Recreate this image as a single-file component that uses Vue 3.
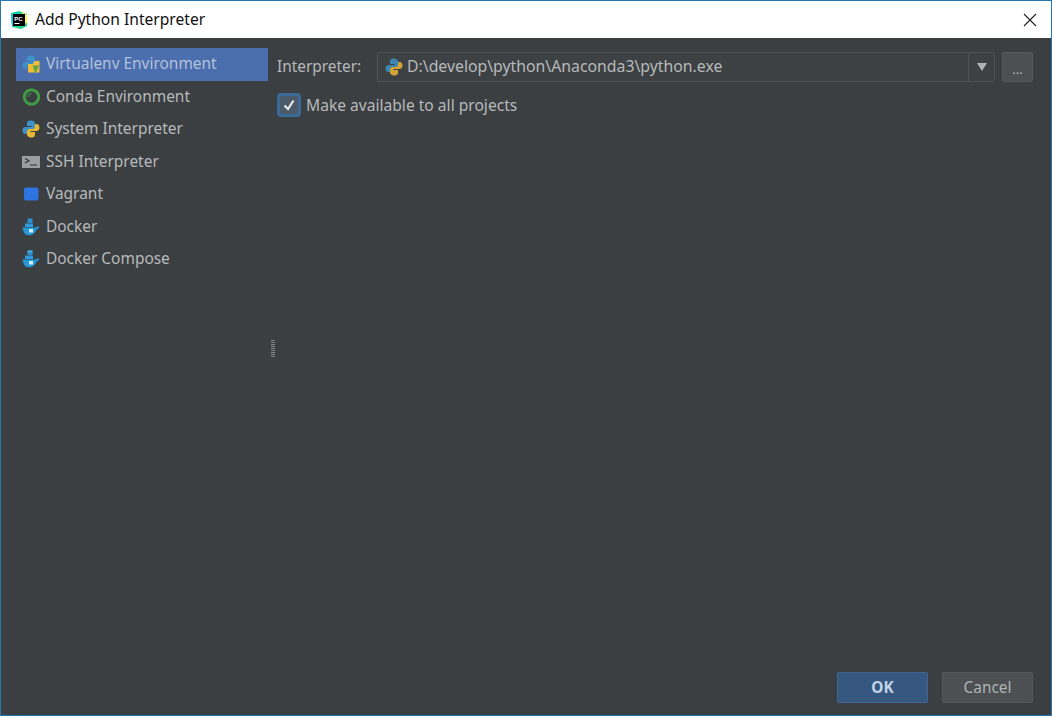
<script setup>
const items = [
  { label: 'Virtualenv Environment', icon: 'venv', selected: true },
  { label: 'Conda Environment', icon: 'conda' },
  { label: 'System Interpreter', icon: 'python' },
  { label: 'SSH Interpreter', icon: 'ssh' },
  { label: 'Vagrant', icon: 'vagrant' },
  { label: 'Docker', icon: 'docker' },
  { label: 'Docker Compose', icon: 'compose' }
]
</script>

<template>
  <div class="window">
    <header class="titlebar">
      <svg class="logo" width="18" height="18" viewBox="0 0 18 18">
        <path d="M1 2 9 0l8 3v12l-6 3-9-2z" fill="#21d789" />
        <path d="M12 1l5 3v8l-4 1z" fill="#fcf84a" />
        <path d="M1 4l7-3 1 9-7 5z" fill="#07c3f2" />
        <rect x="3" y="3" width="12" height="12" fill="#000" />
        <text x="4.2" y="9.5" class="logo-text">PC</text>
        <rect x="4.500" y="12" width="5" height="1" fill="#fff" />
      </svg>
      <span class="title">Add Python Interpreter</span>
      <svg class="close" width="14" height="14" viewBox="0 0 14 14">
        <path d="M1 1l12 12M13 1 1 13" stroke="#222" stroke-width="1.1" fill="none" />
      </svg>
    </header>

    <main class="body">
      <div class="content">
        <nav class="sidebar">
          <div v-for="item in items" :key="item.label" class="row" :class="{ selected: item.selected }">
            <svg class="icon" width="18" height="18" viewBox="0 0 18 18">
              <template v-if="item.icon === 'venv'">
                <path d="M9 .5C5.500.5 5 2 5 3.500V6h4.500v1H3.500C2 7 .5 8 .5 10.500S2 14 3.500 14H5v-2.500C5 10 6 9 7.500 9H11c1 0 2-1 2-2V3.500C13 2 11.500.5 9 .5z" fill="#3d93c9" />
                <path d="M6 9h5l1.500-3 5 0v11.500H6z" fill="#f0bd3a" />
                <path d="M10.500 10.500h6.500l-3 7h-1z" fill="#5fa83f" />
              </template>
              <template v-else-if="item.icon === 'conda'">
                <circle cx="9.500" cy="9" r="7.200" fill="none" stroke="#3f9b46" stroke-width="3" />
                <path d="M6 9a3.500 3.500 0 0 1 3.500-3.500" stroke="#3f9b46" stroke-width="1" fill="none" />
              </template>
              <template v-else-if="item.icon === 'python'">
                <path d="M9 0.500C5.500 0.500 5 2 5 3.500V6h4.500v1H3.500C2 7 .5 8 .5 10.500S2 14 3.500 14H5v-2.500C5 10 6 9 7.500 9H11c1 0 2-1 2-2V3.500C13 2 11.500.5 9 .5z" fill="#3d93c9" />
                <path d="M9 17.500c3.500 0 4-1.500 4-3V12H8.500v-1h6c1.500 0 3-1 3-3.500S16 4 14.500 4H13v2.500C13 8 12 9 10.500 9H7c-1 0-2 1-2 2v3.500c0 1.500 1.500 3 4 3z" fill="#e8b731" />
              </template>
              <template v-else-if="item.icon === 'ssh'">
                <rect x="0" y="3" width="18" height="12" fill="#9b9e9f" />
                <path d="M3 5.500 7 7.800 3 10" stroke="#2f3133" stroke-width="1.100" fill="none" />
                <path d="M8 12h7" stroke="#2f3133" stroke-width="1" />
              </template>
              <template v-else-if="item.icon === 'vagrant'">
                <rect x="2" y="2.500" width="14.500" height="13" rx="2" fill="#2f74e0" />
              </template>
              <template v-else>
                <path d="M.5 9.500h13.500c.5-1 2.200-1.500 3.500-.5-.5 1.500-2 2.300-3 2.300-1 3.500-4 6-7.500 6-4 0-6-3.500-6.500-7.800z" fill="#2497d8" />
                <rect x="3" y="5.500" width="8" height="3.500" fill="#2d9be0" />
                <rect x="5.500" y="0.500" width="5" height="4.500" fill="#2a8fd0" />
                <rect v-if="item.icon === 'compose'" x="5.500" y="0.500" width="5" height="2" fill="#46aee8" />
                <rect x="7" y="11" width="4" height="3.500" fill="#d5eef9" />
              </template>
            </svg>
            <span class="label">{{ item.label }}</span>
          </div>
        </nav>

        <div class="splitter"><i v-for="n in 9" :key="n"></i></div>

        <section class="panel">
          <div class="field">
            <label>Interpreter:</label>
            <div class="combo">
              <svg class="combo-icon" width="18" height="18" viewBox="0 0 18 18">
                <path d="M9 .5C5.500.5 5 2 5 3.500V6h4.500v1H3.500C2 7 .5 8 .5 10.500S2 14 3.500 14H5v-2.500C5 10 6 9 7.500 9H11c1 0 2-1 2-2V3.500C13 2 11.500.5 9 .5z" fill="#3d85b0" />
                <path d="M9 17.500c3.500 0 4-1.500 4-3V12H8.500v-1h6c1.500 0 3-1 3-3.500S16 4 14.500 4H13v2.500C13 8 12 9 10.500 9H7c-1 0-2 1-2 2v3.500c0 1.500 1.500 3 4 3z" fill="#d0a436" />
              </svg>
              <span class="path">D:\develop\python\Anaconda3\python.exe</span>
              <span class="arrow-box"><span class="arrow"></span></span>
            </div>
            <button class="browse">...</button>
          </div>
          <div class="check-row">
            <span class="checkbox">
              <svg width="14" height="14" viewBox="0 0 14 14">
                <path d="M2.500 7.500 6 11l5.500-8.500" stroke="#e4e6e8" stroke-width="2.300" fill="none" />
              </svg>
            </span>
            <span>Make available to all projects</span>
          </div>
        </section>
      </div>

      <footer class="footer">
        <button class="btn primary">OK</button>
        <button class="btn">Cancel</button>
      </footer>
    </main>
  </div>
</template>

<style>
html, body { margin: 0; background: #3c3f41; }
</style>

<style scoped>
.window {
  box-sizing: border-box;
  width: 1052px;
  height: 716px;
  display: flex;
  flex-direction: column;
  border: 1px solid #2878b0;
  font-family: "Noto Sans", "Open Sans", sans-serif;
  font-size: 15.600px;
  color: #b6b9bc;
  background: #3c3f41;
  overflow: hidden;
}
.titlebar {
  height: 37px;
  flex: none;
  background: #fff;
  color: #111;
  display: flex;
  align-items: center;
  padding: 0 14px 0 9px;
}
.logo { flex: none; }
.logo-text { font: 700 6px "Liberation Sans", sans-serif; fill: #fff; }
.title { margin: 0 0 2px 7px; flex: 1; }
.close { flex: none; }
.body {
  flex: 1;
  display: flex;
  flex-direction: column;
  min-height: 0;
}
.content {
  flex: 1;
  display: flex;
  min-height: 0;
  padding: 10px 18px 0 15px;
}
.sidebar {
  width: 252px;
  flex: none;
}
.row {
  height: 32.500px;
  display: flex;
  align-items: center;
  padding-left: 6px;
  gap: 6px;
  box-sizing: border-box;
}
.label { margin-bottom: 2px; font-size: 15.450px; }
.row.selected { background: #4b6eaf; color: #b4c0d8; }
.icon { flex: none; }
.splitter {
  width: 9px;
  flex: none;
  display: flex;
  flex-direction: column;
  align-items: center;
  justify-content: center;
  gap: 1px;
  padding-bottom: 24px;
}
.splitter i {
  width: 4px;
  height: 1px;
  background: #85888a;
}
.panel {
  flex: 1;
  min-width: 0;
  padding-top: 4px;
}
.field {
  display: flex;
  align-items: center;
  height: 30px;
}
.field label { width: 100px; flex: none; margin-bottom: 2px; font-size: 15.400px; }
.combo {
  flex: 1;
  height: 30px;
  box-sizing: border-box;
  border: 1px solid #505355;
  border-radius: 2px;
  background: #3e4143;
  display: flex;
  align-items: center;
  padding-left: 7px;
  min-width: 0;
}
.combo-icon { flex: none; }
.path { margin: 0 0 2px 4px; flex: 1; white-space: nowrap; font-size: 15.800px; }
.arrow-box {
  width: 25px;
  height: 28px;
  border-left: 1px solid #505355;
  display: flex;
  align-items: center;
  justify-content: center;
  flex: none;
}
.arrow {
  width: 0;
  height: 0;
  border-left: 5px solid transparent;
  border-right: 5px solid transparent;
  border-top: 8px solid #b0b3b5;
}
.browse {
  width: 31px;
  height: 30px;
  margin-left: 7px;
  flex: none;
  padding: 3px 0 0;
  border: 1px solid #56595b;
  border-radius: 2px;
  background: #4c5052;
  color: #b6b9bc;
  font: 13px "Noto Sans", sans-serif;
}
.check-row {
  display: flex;
  align-items: center;
  gap: 5px;
  margin-top: 9px;
  height: 27px;
}
.checkbox {
  width: 24px;
  height: 24px;
  box-sizing: border-box;
  border: 3px solid #3a6a96;
  border-radius: 4px;
  background: #4a5a68;
  display: flex;
  align-items: center;
  justify-content: center;
  flex: none;
}
.footer {
  flex: none;
  display: flex;
  justify-content: flex-end;
  gap: 14px;
  padding: 0 18px 12px 0;
}
.btn {
  width: 91px;
  height: 31px;
  border: 1px solid #54585a;
  border-radius: 2px;
  background: #4c5052;
  color: #b0b3b5;
  font: 15.400px "Noto Sans", sans-serif;
  padding: 0 0 1px;
}
.btn.primary {
  background: #365880;
  border-color: #3f6690;
  color: #c2d3e6;
  font-weight: 700;
}
</style>
